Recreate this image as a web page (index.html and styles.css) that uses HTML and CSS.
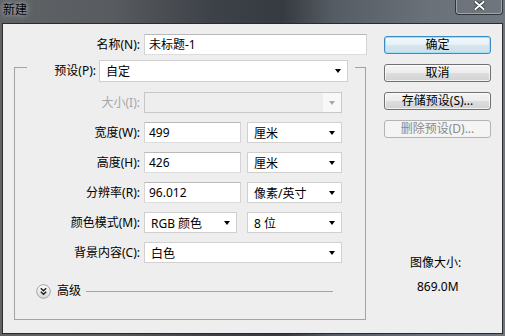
FILE: index.html
```html
<!DOCTYPE html>
<html lang="zh-CN">
  <head>
    <meta charset="UTF-8" />
    <title>新建</title>
    <link rel="stylesheet" href="styles.css">
  </head>
  <body>
    <div class="window">
      <div class="titlebar">
        <span class="title">新建</span>
        <div class="close">
          <svg width="11" height="9" viewBox="0 0 11 9">
            <path d="M1.5 1 L9.5 8 M9.5 1 L1.5 8" stroke="#2a2f35" stroke-width="3.6" stroke-linecap="round" />
            <path d="M1.5 1 L9.5 8 M9.5 1 L1.5 8" stroke="#ffffff" stroke-width="2" stroke-linecap="round" />
          </svg>
        </div>
      </div>

      <div class="client">
        <div class="form">
          <div class="name-row">
            <label class="lbl">名称(N):</label>
            <div class="text name">未标题-1</div>
          </div>

          <div class="group">
            <div class="preset-row">
              <label class="lbl">预设(P):</label>
              <div class="select preset">自定</div>
            </div>

            <div class="fields">
              <label class="lbl disabled">大小(I):</label>
              <div class="select off"></div>

              <label class="lbl">宽度(W):</label>
              <div class="pair">
                <div class="text num">499</div>
                <div class="select unit">厘米</div>
              </div>

              <label class="lbl">高度(H):</label>
              <div class="pair">
                <div class="text num">426</div>
                <div class="select unit">厘米</div>
              </div>

              <label class="lbl">分辨率(R):</label>
              <div class="pair">
                <div class="text num">96.012</div>
                <div class="select unit">像素/英寸</div>
              </div>

              <label class="lbl">颜色模式(M):</label>
              <div class="pair">
                <div class="select mode">RGB 颜色</div>
                <div class="select unit">8 位</div>
              </div>

              <label class="lbl">背景内容(C):</label>
              <div class="select">白色</div>
            </div>

            <div class="advanced">
              <svg class="chevron" width="15" height="15" viewBox="0 0 15 15">
                <defs>
                  <linearGradient id="cg" x1="0" y1="0" x2="0" y2="1">
                    <stop offset="0" stop-color="#ffffff" />
                    <stop offset="1" stop-color="#d6d6d6" />
                  </linearGradient>
                </defs>
                <circle cx="7.5" cy="7.5" r="6.8" fill="url(#cg)" stroke="#a2a2a2" />
                <path d="M4.8 4.3 L7.5 6.8 L10.2 4.3 M4.8 7.8 L7.5 10.3 L10.2 7.8" fill="none" stroke="#1e1e1e" stroke-width="1.4" />
              </svg>
              <span class="adv-text">高级</span>
              <span class="rule"></span>
            </div>
          </div>
        </div>

        <div class="side">
          <div class="btn default">确定</div>
          <div class="btn">取消</div>
          <div class="btn">存储预设(S)...</div>
          <div class="btn off">删除预设(D)...</div>

          <div class="info">
            <div class="info-label">图像大小:</div>
            <div class="info-value">869.0M</div>
          </div>
        </div>
      </div>
    </div>
  </body>
</html>
```

FILE: styles.css
```css
body {
  margin: 0;
  width: 505px;
  height: 336px;
  overflow: hidden;
  font-family: "Noto Sans", "Noto Sans CJK SC", sans-serif;
  font-size: 12px;
  color: #000;
}

.window {
  box-sizing: border-box;
  height: 336px;
  padding: 0 2px 2px;
  display: flex;
  flex-direction: column;
  background: linear-gradient(90deg, #606366 0%, #585b5f 22%, #3d4248 42%, #363b41 56%, #565c63 66%, #6b7178 85%, #70767d 100%);
}

/* 標題列 */
.titlebar {
  height: 23px;
  display: flex;
  align-items: flex-start;
}
.title {
  margin: 2px 0 0 1px;
  line-height: 16px;
  text-shadow: 0 0 5px rgba(200, 200, 200, 0.9), 0 0 10px rgba(180, 180, 180, 0.7);
}
.close {
  box-sizing: border-box;
  width: 48px;
  height: 15px;
  margin-left: auto;
  border: 1px solid #30353b;
  border-top: none;
  border-radius: 0 0 4px 4px;
  box-shadow: inset 0 -1px 0 rgba(255, 255, 255, 0.35), inset 1px 0 0 rgba(255, 255, 255, 0.35), inset -1px 0 0 rgba(255, 255, 255, 0.35);
  display: flex;
  justify-content: center;
  padding-top: 1px;
}

/* 內容區 */
.client {
  flex: 1;
  border: 1px solid #2b2b2b;
  background: #eeeeee;
  display: flex;
}

.form {
  width: 368px;
  padding-top: 10px;
}

.lbl {
  line-height: 21px;
  text-align: right;
  white-space: nowrap;
}
.lbl.disabled {
  color: #a6a6a6;
}

.name-row {
  display: flex;
  height: 21px;
}
.name-row .lbl {
  width: 137px;
  margin-right: 4px;
}

.text {
  box-sizing: border-box;
  height: 21px;
  background: #fff;
  border: 1px solid;
  border-color: #b9b9b9 #d4d4d4 #dddddd #d4d4d4;
  padding-left: 4px;
  line-height: 19px;
}
.text.name {
  width: 223px;
}
.text.num {
  width: 97px;
}

.select {
  box-sizing: border-box;
  height: 21px;
  background: #fff;
  border: 1px solid #d0d0d0;
  padding-left: 6px;
  display: flex;
  align-items: center;
  white-space: nowrap;
}
.select::after {
  content: "";
  margin-left: auto;
  margin-right: 6px;
  border-top: 4px solid #000;
  border-left: 3.5px solid transparent;
  border-right: 3.5px solid transparent;
}
.select.off {
  background: linear-gradient(90deg, #eeeeee calc(100% - 18px), #f8f8f8 0);
  border-color: #c8c8c8;
}
.select.off::after {
  border-top-color: #a8a8a8;
}
.select.unit {
  width: 95px;
}
.select.mode {
  width: 93px;
}

/* 群組框 */
.group {
  box-sizing: border-box;
  width: 352px;
  margin: 12px 0 0 11px;
  border: 1px solid #a3a3a3;
  padding-bottom: 20px;
}
.preset-row {
  display: flex;
  height: 22px;
  margin: -8px 10px 0 12px;
  background: #eeeeee;
}
.preset-row .lbl {
  width: 69px;
  margin-right: 3px;
  line-height: 22px;
}
.select.preset {
  width: 249px;
  height: 22px;
}

.fields {
  display: grid;
  grid-template-columns: 125px 198px;
  grid-auto-rows: 21px;
  column-gap: 4px;
  row-gap: 9px;
  margin-top: 10px;
}
.pair {
  display: flex;
  justify-content: space-between;
}

.advanced {
  display: flex;
  align-items: center;
  height: 16px;
  margin: 20px 32px 0 21px;
}
.chevron {
  margin-right: 6px;
}
.adv-text {
  line-height: 16px;
  margin-right: 5px;
}
.rule {
  flex: 1;
  height: 1px;
  background: #a3a3a3;
}

/* 右側按鈕 */
.side {
  width: 107px;
  margin-left: 13px;
  padding-top: 12px;
  display: flex;
  flex-direction: column;
  gap: 10px;
}
.btn {
  box-sizing: border-box;
  height: 18px;
  border: 1px solid #707070;
  border-radius: 3px;
  background: linear-gradient(#f4f4f4, #ececec 50%, #dedede 50%, #d2d2d2);
  box-shadow: inset 0 0 0 1px rgba(255, 255, 255, 0.7);
  text-align: center;
  line-height: 16px;
}
.btn.default {
  border-color: #3a8cc4;
  box-shadow: inset 0 0 0 1px #9fe0f8;
  background: linear-gradient(#f0f8fc, #e6f1f7 50%, #d8e6ee 50%, #cfdfe8);
}
.btn.off {
  border-color: #b0b4b7;
  background: #f4f4f4;
  box-shadow: none;
  color: #8a8a8a;
}

.info {
  margin-top: 107px;
}
.info-label {
  padding-left: 26px;
  line-height: 16px;
}
.info-value {
  padding-left: 33px;
  margin-top: 8px;
  line-height: 16px;
}
```
